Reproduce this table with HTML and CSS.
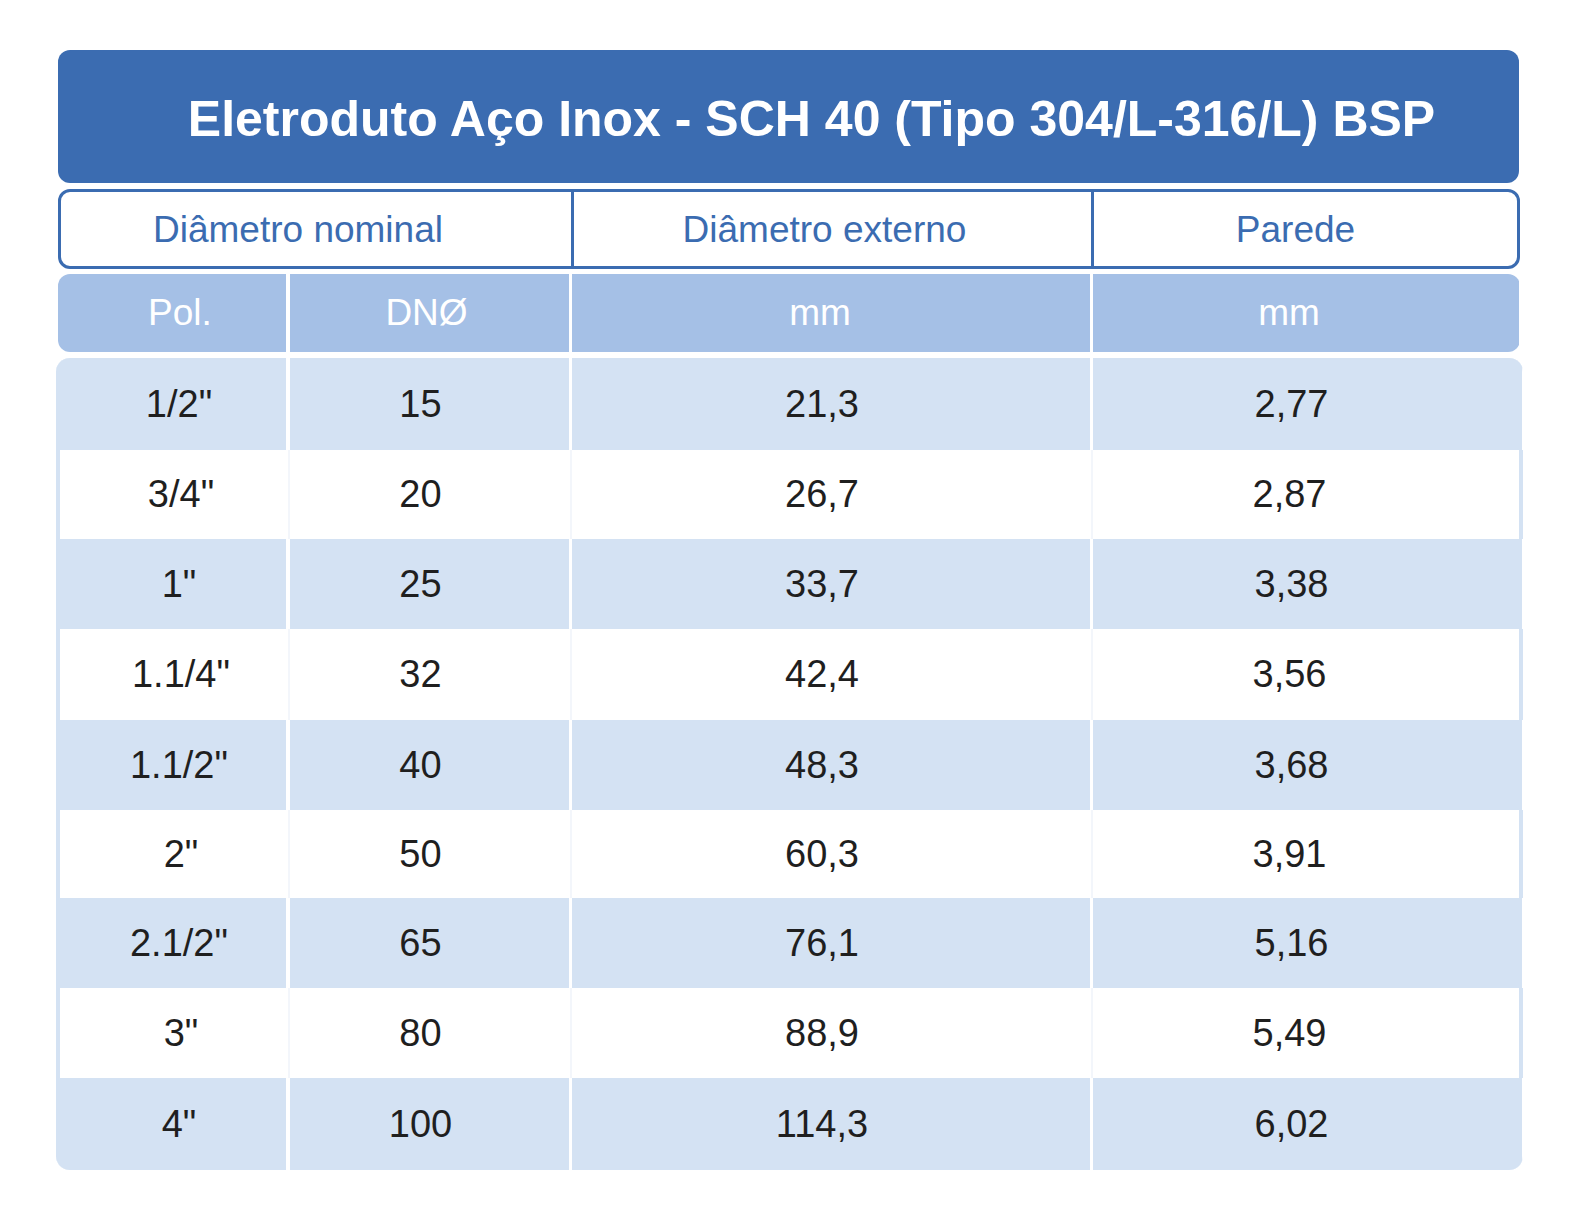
FILE: index.html
```html
<!DOCTYPE html>
<html lang="pt">
<head>
<meta charset="utf-8">
<title>Eletroduto Aço Inox - SCH 40</title>
<link rel="stylesheet" href="styles.css">
</head>
<body>
<div class="sheet">
  <div class="title">Eletroduto Aço Inox - SCH 40 (Tipo 304/L-316/L) BSP</div>
  <div class="head1">
    <div class="h1a">Diâmetro nominal</div>
    <div class="h1b">Diâmetro externo</div>
    <div class="h1c">Parede</div>
  </div>
  <div class="head2">
    <div class="c1">Pol.</div>
    <div class="c2">DNØ</div>
    <div class="c3">mm</div>
    <div class="c4">mm</div>
  </div>
  <div class="body">
    <div class="row blue r1"><div class="c1">1/2"</div><div class="c2">15</div><div class="c3">21,3</div><div class="c4">2,77</div></div>
    <div class="row white r2"><div class="c1">3/4"</div><div class="c2">20</div><div class="c3">26,7</div><div class="c4">2,87</div></div>
    <div class="row blue r3"><div class="c1">1"</div><div class="c2">25</div><div class="c3">33,7</div><div class="c4">3,38</div></div>
    <div class="row white r4"><div class="c1">1.1/4"</div><div class="c2">32</div><div class="c3">42,4</div><div class="c4">3,56</div></div>
    <div class="row blue r5"><div class="c1">1.1/2"</div><div class="c2">40</div><div class="c3">48,3</div><div class="c4">3,68</div></div>
    <div class="row white r6"><div class="c1">2"</div><div class="c2">50</div><div class="c3">60,3</div><div class="c4">3,91</div></div>
    <div class="row blue r7"><div class="c1">2.1/2"</div><div class="c2">65</div><div class="c3">76,1</div><div class="c4">5,16</div></div>
    <div class="row white r8"><div class="c1">3"</div><div class="c2">80</div><div class="c3">88,9</div><div class="c4">5,49</div></div>
    <div class="row blue r9"><div class="c1">4"</div><div class="c2">100</div><div class="c3">114,3</div><div class="c4">6,02</div></div>
  </div>
</div>
</body>
</html>
```
FILE: styles.css
```css
html, body {
  margin: 0;
  padding: 0;
  background: #ffffff;
}
body {
  font-family: "Liberation Sans", Arial, Helvetica, sans-serif;
}
.sheet {
  width: 1462px;
  margin: 50px 0 0 58px;
  display: flex;
  flex-direction: column;
}
.title {
  width: 1461px;
  height: 133px;
  background: #3b6cb1;
  border-radius: 12px;
  color: #ffffff;
  font-weight: bold;
  font-size: 50px;
  display: flex;
  align-items: center;
  justify-content: center;
  padding-left: 46px;
  padding-top: 4px;
  box-sizing: border-box;
}
.head1 {
  margin-top: 6px;
  height: 80px;
  box-sizing: border-box;
  border: 3px solid #3b6cb1;
  border-radius: 12px;
  display: grid;
  grid-template-columns: 510px 520px 1fr;
  color: #3b6cb1;
  font-size: 37px;
}
.head1 > div {
  display: flex;
  align-items: center;
  justify-content: center;
  padding-top: 2px;
}
.h1a { padding-right: 36px; }
.h1b { border-left: 3px solid #3b6cb1; padding-right: 16px; }
.h1c { border-left: 3px solid #3b6cb1; padding-right: 20px; }

.head2 {
  margin-top: 5px;
  height: 78px;
  border-radius: 12px;
  overflow: hidden;
  background: #ffffff;
  display: grid;
  grid-template-columns: 228px 280px 518px 426px;
  column-gap: 3px;
  color: #ffffff;
  font-size: 37px;
}
.head2 > div {
  background: #a5c0e6;
  display: flex;
  align-items: center;
  justify-content: center;
}
.head2 .c1 { padding-left: 16px; }
.head2 .c2 { padding-right: 6px; margin-left: 1px; }
.head2 .c3 { padding-right: 22px; }
.head2 .c4 { padding-right: 34px; }

.body {
  margin: 6px -3px 0 -2px;
  border-radius: 14px;
  overflow: hidden;
  background: #d4e2f3;
  display: flex;
  flex-direction: column;
  color: #1f1f1f;
  font-size: 38px;
}
.row {
  display: grid;
  grid-template-columns: 230px 280px 518px 429px;
  column-gap: 3px;
  height: 90px;
}
.row > div {
  display: flex;
  align-items: center;
  justify-content: center;
}
.row.blue {
  background: #ffffff;
}
.row.blue > div {
  background: #d4e2f3;
}
.row.blue > .c2 { margin-left: 1px; }
.row.white {
  background: #ffffff;
  margin: 0 4px;
  grid-template-columns: 226px 280px 518px 425px;
}
.row.white > .c2 { margin-left: 1px; }
.row.white > div + div {
  box-shadow: -2px 0 0 #f3f6fb;
}
.row .c1 { padding-left: 16px; }
.row .c2 { padding-right: 18px; }
.row .c3 { padding-right: 18px; }
.row .c4 { padding-right: 32px; }
.r1 { height: 92px; }
.r2 { height: 89px; }
.r4 { height: 91px; }
.r6 { height: 88px; }
.r9 { height: 92px; }
```
